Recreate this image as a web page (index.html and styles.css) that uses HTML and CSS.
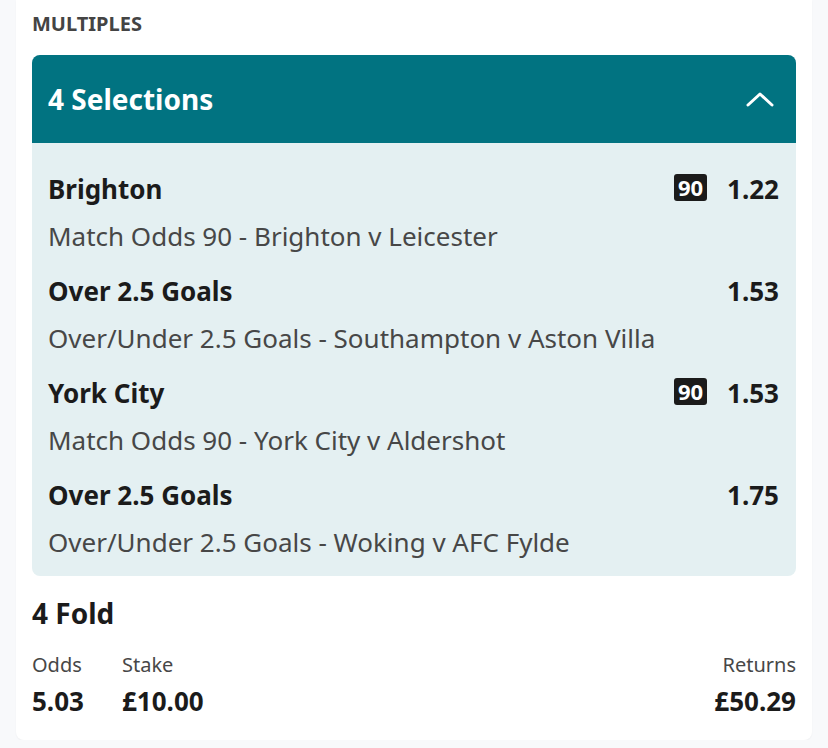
FILE: index.html
```html
<!DOCTYPE html>
<html lang="en">
<head>
  <meta charset="UTF-8" />
  <meta name="viewport" content="width=device-width, initial-scale=1.0"/>
  <title>Bet Slip - Multiples</title>
  <link rel="stylesheet" href="styles.css">
</head>
<body>

  <div class="card">
    <h3 class="section-title">MULTIPLES</h3>

    <!-- Selections panel -->
    <div class="panel">
      <div class="panel-head">
        <span class="panel-title">4 Selections</span>
        <svg class="chevron" width="28" height="16" viewBox="0 0 28 16">
          <path d="M2 14 L14 3 L26 14" fill="none" stroke="#fff" stroke-width="3" stroke-linecap="round" stroke-linejoin="round"/>
        </svg>
      </div>
      <div class="panel-body">
        <div class="selection">
          <div class="sel-row">
            <span class="sel-name">Brighton</span>
            <span class="sel-right"><span class="badge">90</span><span class="sel-odds">1.22</span></span>
          </div>
          <div class="sel-market">Match Odds 90 - Brighton v Leicester</div>
        </div>
        <div class="selection">
          <div class="sel-row">
            <span class="sel-name">Over 2.5 Goals</span>
            <span class="sel-right"><span class="sel-odds">1.53</span></span>
          </div>
          <div class="sel-market">Over/Under 2.5 Goals - Southampton v Aston Villa</div>
        </div>
        <div class="selection">
          <div class="sel-row">
            <span class="sel-name">York City</span>
            <span class="sel-right"><span class="badge">90</span><span class="sel-odds">1.53</span></span>
          </div>
          <div class="sel-market">Match Odds 90 - York City v Aldershot</div>
        </div>
        <div class="selection">
          <div class="sel-row">
            <span class="sel-name">Over 2.5 Goals</span>
            <span class="sel-right"><span class="sel-odds">1.75</span></span>
          </div>
          <div class="sel-market">Over/Under 2.5 Goals - Woking v AFC Fylde</div>
        </div>
      </div>
    </div>

    <!-- Fold summary -->
    <div class="fold">
      <div class="fold-title">4 Fold</div>
      <div class="fold-stats">
        <div class="stat stat-odds">
          <div class="stat-label">Odds</div>
          <div class="stat-value">5.03</div>
        </div>
        <div class="stat">
          <div class="stat-label">Stake</div>
          <div class="stat-value">£10.00</div>
        </div>
        <div class="stat stat-returns">
          <div class="stat-label">Returns</div>
          <div class="stat-value">£50.29</div>
        </div>
      </div>
    </div>
  </div>

</body>
</html>
```

FILE: styles.css
```css
* { box-sizing: border-box; margin: 0; padding: 0; }
body { font-family: 'Noto Sans', 'Open Sans', sans-serif; background: #f8f9fb; color: #1b1b1b; }

.card {
  background: #fff;
  margin: 0 16px;
  padding: 10px 16px 21px;
  border-radius: 0 0 8px 8px;
  box-shadow: 0 1px 2px rgba(0,0,0,0.04);
}

.section-title {
  font-size: 20px;
  font-weight: 700;
  color: #444;
  line-height: 28px;
  margin-bottom: 17px;
}

.panel { border-radius: 8px; overflow: hidden; background: #e4f0f2; }

.panel-head {
  background: #017381;
  height: 88px;
  padding: 0 22px 0 16px;
  display: flex;
  justify-content: space-between;
  align-items: center;
}
.panel-title { color: #fff; font-size: 28px; font-weight: 700; }
.chevron { display: block; }

.panel-body { padding: 28px 17px 16px 16px; }

.selection + .selection { margin-top: 19px; }
.sel-row { display: flex; justify-content: space-between; align-items: center; line-height: 36px; }
.sel-name { font-size: 26px; font-weight: 700; }
.sel-right { display: flex; align-items: center; gap: 20px; }
.sel-odds { font-size: 26px; font-weight: 700; }
.badge {
  background: #1b1b1b;
  color: #fff;
  font-size: 22px;
  font-weight: 700;
  line-height: 27px;
  padding: 0 4px;
  border-radius: 3px;
  margin-top: -3px;
}
.sel-market { font-size: 26px; line-height: 36px; color: #474747; margin-top: 11px; }

.fold { padding-top: 19px; }
.fold-title { font-size: 28px; font-weight: 700; line-height: 36px; }
.fold-stats { display: flex; margin-top: 20px; }
.stat-odds { width: 90px; }
.stat-label { font-size: 20px; line-height: 28px; color: #474747; }
.stat-value { font-size: 26px; font-weight: 700; line-height: 36px; margin-top: 4px; }
.stat-returns { margin-left: auto; text-align: right; }
```
